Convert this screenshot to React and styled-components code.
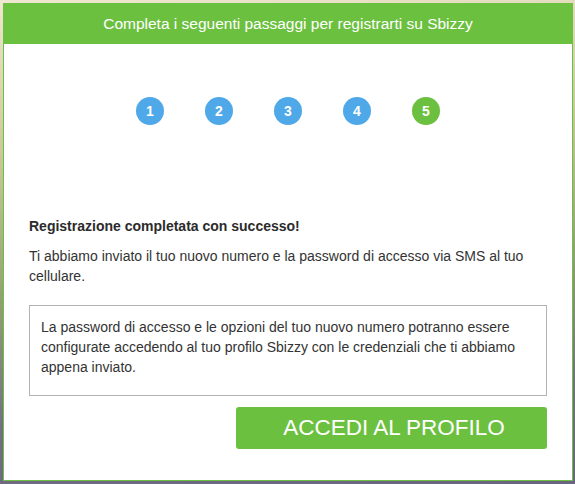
import React from 'react';
import styled, { createGlobalStyle } from 'styled-components';

const GlobalStyle = createGlobalStyle`
    html, body {
        margin: 0;
        padding: 0;
    }
    body {
        font-family: "Liberation Sans", Arial, sans-serif;
        font-size: 14px;
        line-height: 20px;
        color: #333;
        background: linear-gradient(175deg, #efe7cf 0%, #c9c79a 30%, #93a274 55%, #756f84 80%, #6a6580 100%);
        min-height: 484px;
    }
`;

const Page = styled.div`
    padding: 3px 2px 3px 3px;
    width: 575px;
    height: 484px;
    box-sizing: border-box;
`;

const Modal = styled.div`
    width: 570px;
    height: 478px;
    box-sizing: border-box;
    border: 1px solid #6cc03f;
    background: #fff;
    display: flex;
    flex-direction: column;
`;

const Header = styled.div`
    height: 40px;
    background: #6cc03f;
    color: #fff;
    font-size: 15.5px;
    display: flex;
    align-items: center;
    justify-content: center;
`;

const Body = styled.div`
    padding: 0 25px;
    display: flex;
    flex-direction: column;
`;

const Steps = styled.div`
    display: flex;
    justify-content: center;
    gap: 41px;
    margin-top: 53px;
`;

const Step = styled.div`
    width: 28px;
    height: 28px;
    border-radius: 50%;
    background: ${p => (p.$active ? '#6cc03f' : '#4fa8e8')};
    color: #fff;
    font-weight: bold;
    font-size: 14px;
    display: flex;
    align-items: center;
    justify-content: center;
`;

const Title = styled.h4`
    margin: 91px 0 0;
    font-size: 14px;
    font-weight: bold;
    line-height: 20px;
    color: #2b2b2b;
`;

const Text = styled.p`
    margin: 10px 0 0;
`;

const InfoBox = styled.div`
    margin-top: 19px;
    border: 1px solid #b2b2b2;
    padding: 11px 11px 18px;
`;

const Actions = styled.div`
    display: flex;
    justify-content: flex-end;
    margin-top: 11px;
`;

const Button = styled.button`
    width: 311px;
    height: 42px;
    border: none;
    border-radius: 3px;
    background: #6cc03f;
    color: #fff;
    font-family: "Liberation Sans", Arial, sans-serif;
    font-size: 22.5px;
    padding: 0 0 0 5px;
    cursor: pointer;
`;

const App = () => {
    const steps = [1, 2, 3, 4, 5];
    return (
        <>
            <GlobalStyle />
            <Page>
                <Modal>
                    <Header>Completa i seguenti passaggi per registrarti su Sbizzy</Header>
                    <Body>
                        <Steps>
                            {steps.map(n => (
                                <Step key={n} $active={n === 5}>{n}</Step>
                            ))}
                        </Steps>
                        <Title>Registrazione completata con successo!</Title>
                        <Text>
                            Ti abbiamo inviato il tuo nuovo numero e la password di accesso via SMS al tuo cellulare.
                        </Text>
                        <InfoBox>
                            La password di accesso e le opzioni del tuo nuovo numero potranno essere configurate accedendo al tuo profilo Sbizzy con le credenziali che ti abbiamo appena inviato.
                        </InfoBox>
                        <Actions>
                            <Button>ACCEDI AL PROFILO</Button>
                        </Actions>
                    </Body>
                </Modal>
            </Page>
        </>
    );
};

export default App;
